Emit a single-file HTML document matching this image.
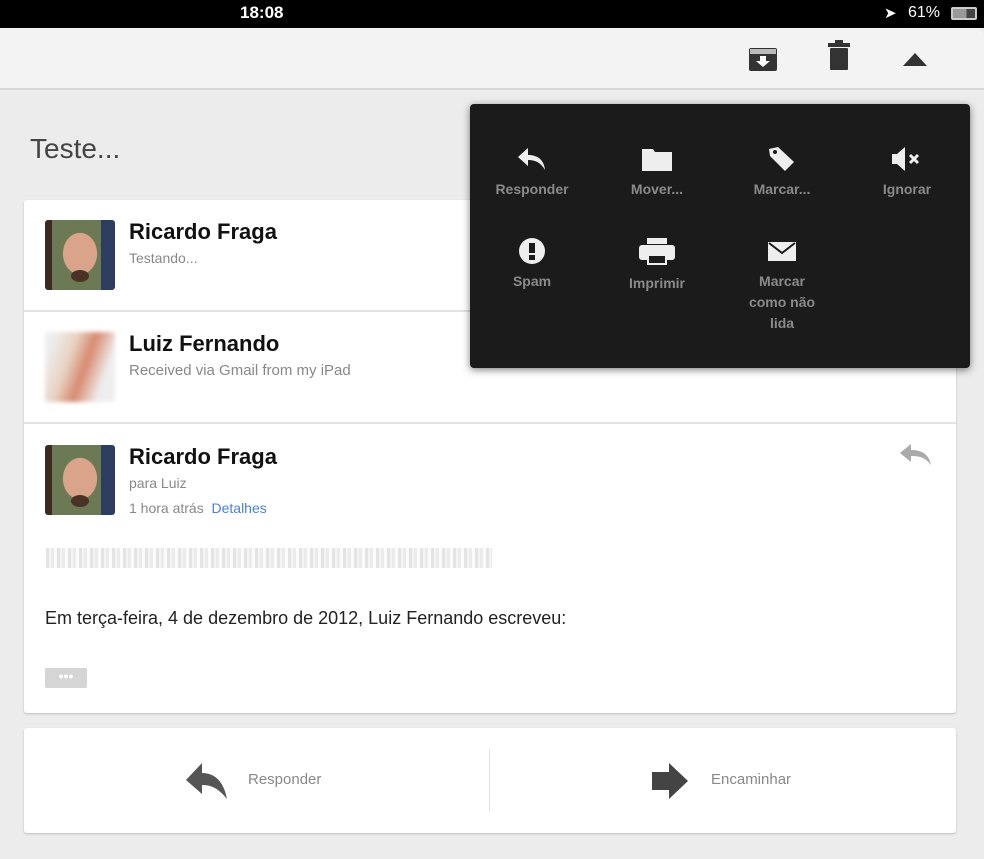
<!DOCTYPE html>
<html><head><meta charset="utf-8"><style>
*{margin:0;padding:0;box-sizing:border-box}
body{width:984px;height:859px;overflow:hidden;background:#ececec;font-family:"Liberation Sans",sans-serif;position:relative}
.abs{position:absolute}
.status{left:0;top:0;width:984px;height:28px;background:#000;color:#fff;font-size:17px}
.toolbar{left:0;top:28px;width:984px;height:62px;background:#f3f3f3;border-bottom:2px solid #d8d8d8;border-top-right-radius:8px}
.card{background:#fff;left:24px;width:932px;box-shadow:0 1px 2px rgba(0,0,0,.2);border-radius:3px}
.name{font-size:22px;font-weight:bold;color:#111}
.sub{font-size:14px;color:#888}
.av{width:70px;height:70px;border-radius:3px;overflow:hidden}
.face{background:radial-gradient(ellipse 28px 34px at 50% 48%,#d9a48a 60%,transparent 62%),linear-gradient(90deg,#3b2a20 0 10%,#6b7a55 10% 80%,#2d3d60 80%)}
.face::after{content:"";position:absolute;left:26px;top:50px;width:18px;height:12px;background:#4a3326;border-radius:50%}
.menu{left:470px;top:104px;width:500px;height:264px;background:#1b1b1b;border-radius:4px;box-shadow:0 2px 8px rgba(0,0,0,.5)}
.mi{position:absolute;width:124px;text-align:center;color:#8a8a8a;font-size:14px;font-weight:bold;line-height:21px}
.mi svg{display:block;margin:0 auto 7px}
</style></head><body>
<div class="abs status"><span class="abs" style="left:240px;top:3px;font-weight:bold">18:08</span>
<span class="abs" style="left:884px;top:4px;font-size:15px">➤</span>
<span class="abs" style="left:908px;top:4px;font-size:16px">61%</span>
<span class="abs" style="left:951px;top:7px;width:26px;height:13px;border:2px solid #ccc;border-radius:2px;background:linear-gradient(90deg,#999 61%,#444 61%)"></span></div>
<div class="abs toolbar">
<svg class="abs" style="left:748px;top:18px" width="30" height="26" viewBox="0 0 30 26"><rect x="1" y="2" width="28" height="23" rx="2" fill="#333"/><rect x="2" y="3" width="26" height="5" fill="#bbb"/><path d="M12 10h6v5h4l-7 6-7-6h4z" fill="#fff"/></svg>
<svg class="abs" style="left:827px;top:12px" width="24" height="30" viewBox="0 0 24 30"><rect x="8" y="0" width="8" height="4" fill="#333"/><rect x="1" y="3" width="22" height="4" fill="#333"/><rect x="3" y="8" width="18" height="22" rx="1" fill="#333"/></svg>
<svg class="abs" style="left:903px;top:25px" width="24" height="14"><path d="M12 0L24 13H0z" fill="#333"/></svg>
</div>
<div class="abs" style="left:30px;top:133px;font-size:28px;color:#444">Teste...</div>

<div class="abs card" style="top:200px;height:513px"></div>
<div class="abs" style="left:24px;top:310px;width:932px;height:2px;background:#e2e2e2"></div>
<div class="abs" style="left:24px;top:422px;width:932px;height:2px;background:#e2e2e2"></div>

<div class="abs av face" style="left:45px;top:220px"></div>
<div class="abs name" style="left:129px;top:219px">Ricardo Fraga</div>
<div class="abs sub" style="left:129px;top:250px">Testando...</div>

<div class="abs av" style="left:45px;top:332px;background:linear-gradient(110deg,#eee 10%,#e8d2c2 35%,#d88a70 55%,#eee 80%);filter:blur(2px)"></div>
<div class="abs name" style="left:129px;top:331px">Luiz Fernando</div>
<div class="abs sub" style="left:129px;top:362px;font-size:15px">Received via Gmail from my iPad</div>

<div class="abs av face" style="left:45px;top:445px"></div>
<div class="abs name" style="left:129px;top:444px">Ricardo Fraga</div>
<div class="abs sub" style="left:129px;top:475px">para Luiz</div>
<div class="abs sub" style="left:129px;top:500px">1 hora atrás &nbsp;<span style="color:#4a80d8">Detalhes</span></div>
<svg class="abs" style="left:899px;top:442px" width="34" height="24" viewBox="0 0 34 24"><path d="M12 2L1 11l11 9v-6c9 0 15 2 20 9-2-10-8-15-20-15z" fill="#aaa"/></svg>

<div class="abs" style="left:46px;top:548px;width:446px;height:20px;background:repeating-linear-gradient(90deg,#ddd 0 3px,#f2f2f2 3px 5px,#e6e6e6 5px 8px,#fafafa 8px 11px);opacity:.8"></div>
<div class="abs" style="left:45px;top:608px;font-size:18px;color:#222">Em terça-feira, 4 de dezembro de 2012, Luiz Fernando escreveu:</div>
<div class="abs" style="left:45px;top:668px;width:42px;height:20px;background:#d5d5d5;border-radius:2px;color:#fff;font-size:14px;text-align:center;line-height:16px;font-weight:bold">•••</div>

<div class="abs card" style="top:728px;height:105px"></div>
<div class="abs" style="left:489px;top:749px;width:1px;height:63px;background:#e2e2e2"></div>
<svg class="abs" style="left:184px;top:762px" width="46" height="38" viewBox="0 0 46 38"><path d="M18 1L2 18l16 14v-9c10 0 17 4 25 14C40 21 32 11 18 11z" fill="#555"/></svg>
<div class="abs" style="left:248px;top:771px;font-size:15px;color:#888">Responder</div>
<svg class="abs" style="left:651px;top:763px" width="40" height="36" viewBox="0 0 40 36"><path d="M1 9h17V0l19 18-19 18v-9H1z" fill="#444"/></svg>
<div class="abs" style="left:711px;top:771px;font-size:15px;color:#888">Encaminhar</div>

<div class="abs menu">
<div class="mi" style="left:0;top:42px"><svg width="30" height="26" viewBox="0 0 30 26"><path d="M11 2L1 11l10 9v-6c8 0 13 3 17 10-1-10-7-15-17-15z" fill="#eee"/></svg>Responder</div>
<div class="mi" style="left:125px;top:42px"><svg width="32" height="26" viewBox="0 0 32 26"><path d="M1 3h11l2 3h17v19H1z" fill="#eee"/></svg>Mover...</div>
<div class="mi" style="left:250px;top:42px"><svg width="30" height="26" viewBox="0 0 30 26"><path d="M2 3l9-2 16 15-9 9L3 10z" fill="#eee"/><circle cx="8" cy="6" r="2" fill="#1b1b1b"/></svg>Marcar...</div>
<div class="mi" style="left:375px;top:42px"><svg width="34" height="26" viewBox="0 0 34 26"><path d="M2 8h5l8-7v24l-8-7H2z" fill="#eee"/><path d="M20 9l8 8M28 9l-8 8" stroke="#eee" stroke-width="3"/></svg>Ignorar</div>
<div class="mi" style="left:0;top:134px"><svg width="30" height="26" viewBox="0 0 30 26"><circle cx="15" cy="13" r="13" fill="#eee"/><rect x="12" y="5" width="6" height="10" fill="#1b1b1b"/><rect x="12" y="17" width="6" height="5" fill="#1b1b1b"/></svg>Spam</div>
<div class="mi" style="left:125px;top:134px"><svg width="38" height="28" viewBox="0 0 38 28"><rect x="9" y="0" width="20" height="6" fill="#eee"/><rect x="1" y="7" width="36" height="15" rx="3" fill="#eee"/><rect x="9" y="17" width="20" height="10" fill="#eee"/><rect x="11" y="18" width="16" height="7" fill="#1b1b1b"/></svg>Imprimir</div>
<div class="mi" style="left:250px;top:134px"><svg width="30" height="26" viewBox="0 0 30 26"><rect x="1" y="4" width="28" height="19" fill="#eee"/><path d="M2 5l13 10L28 5" stroke="#1b1b1b" stroke-width="2" fill="none"/></svg>Marcar<br>como não<br>lida</div>
</div>
</body></html>
